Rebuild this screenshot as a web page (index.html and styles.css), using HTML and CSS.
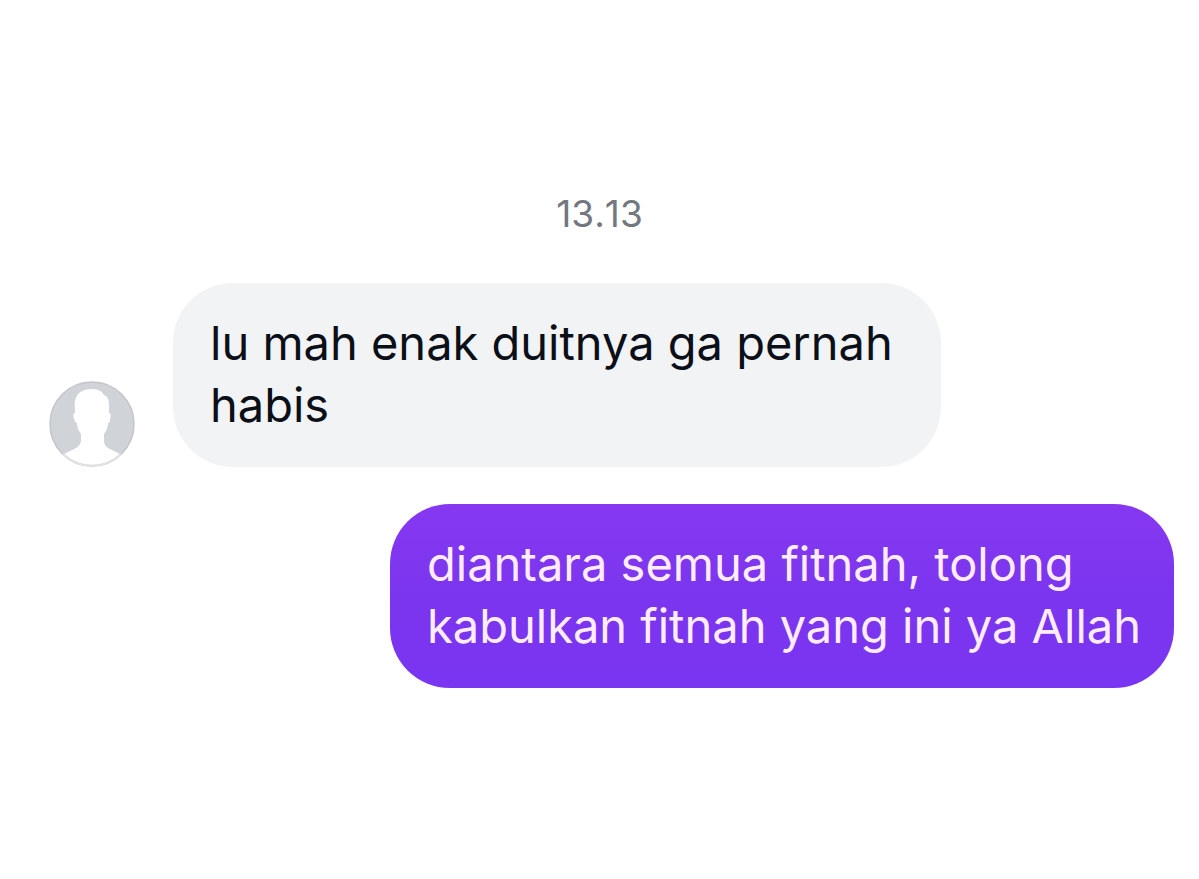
FILE: index.html
```html
<!DOCTYPE html>
<html lang="id">
<head>
<meta charset="utf-8">
<meta name="viewport" content="width=device-width, initial-scale=1">
<title>Chat</title>
<link rel="stylesheet" href="styles.css">
</head>
<body>
<main class="chat">
  <time class="timestamp" datetime="13:13">13.13</time>
  <div class="row received">
    <svg class="avatar" viewBox="0 0 86 86" role="img" aria-label="Avatar">
      <defs><clipPath id="disc"><circle cx="43" cy="43" r="42"/></clipPath></defs>
      <circle cx="43" cy="43" r="42" fill="#d0d4d9"/>
      <path clip-path="url(#disc)" fill="#fff" d="M43 8C35 8 29 11 27 17C25 21 26 27 26 32C24 32 24 35 25 38C26 41 27 42 28 42C28 47 30 50 32 53V59C32 63 30 65 27 67C22 70 17 71 13 75L8 88H78L73 75C69 71 64 70 59 67C56 65 55 63 55 59V53C57 50 59 47 59 42C60 42 61 41 61 38C62 35 62 32 60 32C60 27 61 21 58 16C56 14 54 14 53 11C50 9 47 8 43 8Z"/>
      <circle cx="43" cy="43" r="42" fill="none" stroke="#c5c5c9" stroke-width="1.5"/>
      <path d="M14 73A42 42 0 0 0 72 73" fill="none" stroke="#e2e0e2" stroke-width="2"/>
    </svg>
    <p class="bubble">lu mah enak duitnya ga pernah habis</p>
  </div>
  <div class="row sent">
    <p class="bubble">diantara semua fitnah, tolong kabulkan fitnah yang ini ya Allah</p>
  </div>
</main>
</body>
</html>
```
FILE: styles.css
```css
* { box-sizing: border-box; }
body {
  margin: 0;
  background: #fff;
  font-family: Inter, "Liberation Sans", sans-serif;
}
.chat {
  display: flex;
  flex-direction: column;
  padding: 190px 0 48px;
}
.timestamp {
  align-self: center;
  margin-bottom: 45px;
  color: #737780;
  font-size: 37px;
  line-height: 48px;
  font-kerning: none;
}
.row {
  display: flex;
  align-items: flex-end;
  padding: 0 25px 0 49px;
}
.received { gap: 38px; }
.sent {
  justify-content: flex-end;
  margin-top: 37px;
}
.avatar {
  flex: none;
  width: 86px;
  height: 86px;
}
.bubble {
  margin: 0;
  max-width: 784px;
  padding: 29px 24px 31px 37px;
  border-radius: 60px;
  font-size: 47px;
  line-height: 62px;
}
.received .bubble {
  max-width: 768px;
  background: #f2f3f5;
  color: #0b0f18;
}
.sent .bubble {
  background: linear-gradient(#8638f1, #7b35ee 50%, #7a35f2);
  color: #ffedff;
}
```
